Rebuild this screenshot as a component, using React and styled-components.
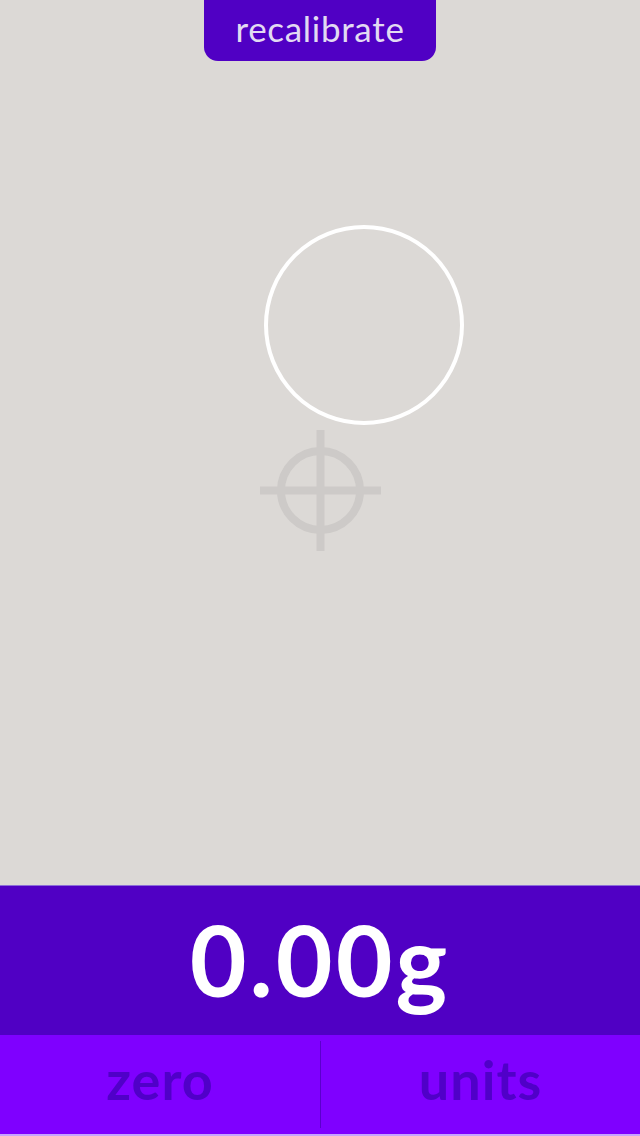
import React from "react";
import styled, { createGlobalStyle } from "styled-components";

const Global = createGlobalStyle`
  html, body { margin: 0; padding: 0; }
  body { font-family: "Lato", "Noto Sans", sans-serif; background: #dcd9d6; }
`;

const Screen = styled.div`
  width: 640px;
  height: 1136px;
  display: flex;
  flex-direction: column;
  overflow: hidden;
`;

const Stage = styled.div`
  position: relative;
  flex: 1;
  background: #dcd9d6;
  display: flex;
  justify-content: center;
  align-items: flex-start;
`;

const Recalibrate = styled.button`
  width: 232px;
  height: 61px;
  border: none;
  border-radius: 0 0 14px 14px;
  background: #5000c4;
  color: #e2daf2;
  font-family: "Lato", "Noto Sans", sans-serif;
  font-size: 35px;
  font-weight: 400;
  letter-spacing: 0.7px;
  padding: 0 0 6px;
  cursor: pointer;
`;

const Bubble = styled.div`
  position: absolute;
  left: ${(p) => p.$x - 100}px;
  top: ${(p) => p.$y - 100}px;
  width: 200px;
  height: 200px;
  box-sizing: border-box;
  border: 4px solid #ffffff;
  border-radius: 50%;
`;

const Crosshair = styled.svg`
  position: absolute;
  left: 260px;
  top: 430px;
  width: 121px;
  height: 121px;
`;

const Panel = styled.div`
  display: flex;
  flex-direction: column;
  border-top: 1px solid #8c6ed8;
`;

const Readout = styled.div`
  height: 149px;
  background: #5000c4;
  color: #ffffff;
  display: flex;
  align-items: center;
  justify-content: center;
  font-family: "Lato", "Noto Sans", sans-serif;
  font-weight: 700;
  font-size: 98px;
  letter-spacing: 3px;
  padding-bottom: 4px;
  box-sizing: border-box;
`;

const Buttons = styled.div`
  height: 101px;
  background: #7f00ff;
  display: grid;
  grid-template-columns: 1fr 1fr;
  border-bottom: 2px solid #c7a4ff;
  box-sizing: border-box;
`;

const Action = styled.button`
  border: none;
  background: transparent;
  color: #5000c8;
  font-family: "Lato", "Noto Sans", sans-serif;
  font-weight: 700;
  font-size: 54px;
  letter-spacing: 1px;
  margin: 6px 0;
  padding: 0 0 10px;
  border-left: ${(p) => (p.$divider ? "1.5px solid #5a00cc" : "none")};
  cursor: pointer;
`;

export default function App() {
  return (
    <>
      <Global />
      <Screen>
        <Stage>
          <Recalibrate>recalibrate</Recalibrate>
          <Bubble $x={364} $y={325} />
          <Crosshair viewBox="0 0 121 121">
            <g stroke="#cdcac8" strokeWidth="8" fill="none">
              <circle cx="60.5" cy="60.5" r="39.5" />
              <line x1="0" y1="60.5" x2="121" y2="60.5" />
              <line x1="60.5" y1="0" x2="60.5" y2="121" />
            </g>
          </Crosshair>
        </Stage>
        <Panel>
          <Readout>0.00g</Readout>
          <Buttons>
            <Action>zero</Action>
            <Action $divider>units</Action>
          </Buttons>
        </Panel>
      </Screen>
    </>
  );
}
